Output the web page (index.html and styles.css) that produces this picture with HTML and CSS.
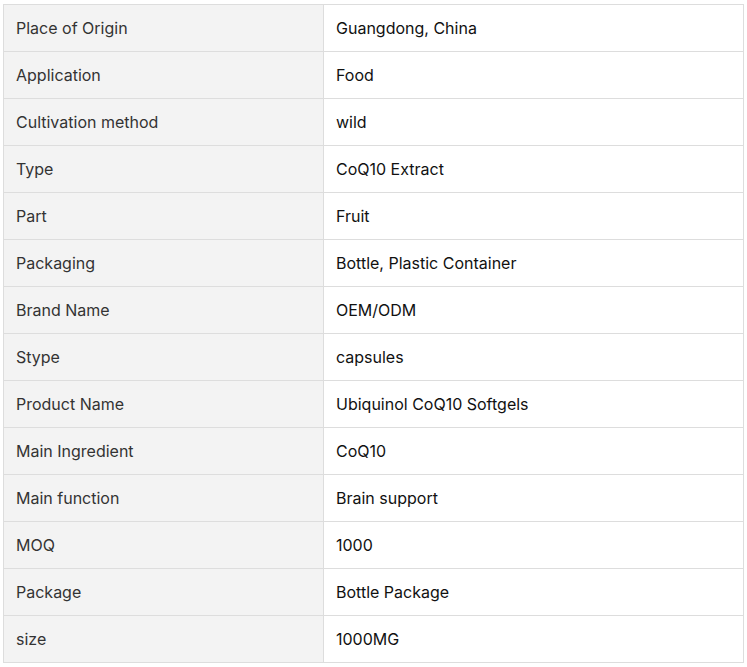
FILE: index.html
```html
<!DOCTYPE html>
<html>
<head>
<meta charset="utf-8">
<link rel="stylesheet" href="styles.css">
</head>
<body>
<div class="specs">
  <div class="cell key">Place of Origin</div><div class="cell val">Guangdong, China</div>
  <div class="cell key">Application</div><div class="cell val">Food</div>
  <div class="cell key">Cultivation method</div><div class="cell val">wild</div>
  <div class="cell key">Type</div><div class="cell val">CoQ10 Extract</div>
  <div class="cell key">Part</div><div class="cell val">Fruit</div>
  <div class="cell key">Packaging</div><div class="cell val">Bottle, Plastic Container</div>
  <div class="cell key">Brand Name</div><div class="cell val">OEM/ODM</div>
  <div class="cell key">Stype</div><div class="cell val">capsules</div>
  <div class="cell key">Product Name</div><div class="cell val">Ubiquinol CoQ10 Softgels</div>
  <div class="cell key">Main Ingredient</div><div class="cell val">CoQ10</div>
  <div class="cell key">Main function</div><div class="cell val">Brain support</div>
  <div class="cell key">MOQ</div><div class="cell val">1000</div>
  <div class="cell key">Package</div><div class="cell val">Bottle Package</div>
  <div class="cell key">size</div><div class="cell val">1000MG</div>
</div>
</body>
</html>
```

FILE: styles.css
```css
html, body {
  margin: 0;
  background: #fff;
}
body {
  padding: 4px 3px;
  font-family: Inter, "Noto Sans", sans-serif;
  font-size: 16px;
  color: #333;
}
.specs {
  display: grid;
  grid-template-columns: 320px 420px;
  width: 741px;
  box-sizing: border-box;
  border-top: 1px solid #ddd;
  border-left: 1px solid #ddd;
}
.cell {
  box-sizing: border-box;
  height: 47px;
  padding: 0 12px;
  display: flex;
  align-items: center;
  border-right: 1px solid #ddd;
  border-bottom: 1px solid #ddd;
}
.key {
  background: #f3f3f3;
}
.val {
  background: #fff;
  color: #111;
}
```
